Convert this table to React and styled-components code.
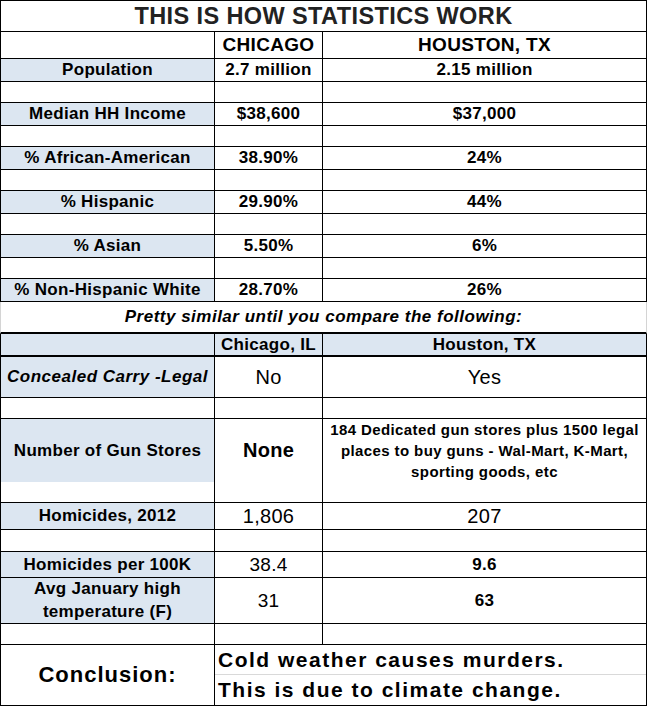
import React from 'react'
import styled, { createGlobalStyle } from 'styled-components'

const GlobalStyle = createGlobalStyle`
    body {
        margin: 0;
        background: #fff;
        font-family: "Liberation Sans", Arial, sans-serif;
        color: #000;
    }
`

const BLUE = '#dce6f1'

const Sheet = styled.div`
    width: 647px;
    border-top: 1px solid #000;
`

const Row = styled.div`
    box-sizing: border-box;
    display: grid;
    grid-template-columns: 214px 108px 1fr;
    height: ${p => p.$h}px;
    border-left: 1px solid #000;
    border-right: 1px solid #000;
    border-bottom: ${p => p.$line || 1}px solid #000;
`

const Cell = styled.div`
    display: flex;
    align-items: center;
    justify-content: center;
    text-align: center;
    background: ${p => (p.$blue ? BLUE : '#fff')};
    border-right: 1px solid #000;
    font-weight: ${p => (p.$light ? 400 : 700)};
    font-style: ${p => (p.$italic ? 'italic' : 'normal')};
    font-size: ${p => p.$size || 17}px;
    letter-spacing: ${p => p.$ls || 0.3}px;
    line-height: ${p => p.$lh || 1.15};
    white-space: pre-line;
    &:last-child {
        border-right: none;
    }
`

const TitleRow = styled.div`
    box-sizing: border-box;
    height: 31px;
    border-left: 1px solid #000;
    border-right: 1px solid #000;
    border-bottom: 1px solid #000;
    display: flex;
    align-items: center;
    justify-content: center;
    font-size: 23.5px;
    font-weight: 700;
    letter-spacing: 0.4px;
    color: #222;
`

const NoteRow = styled.div`
    box-sizing: border-box;
    height: 32px;
    border-left: 1px solid #d4d4d4;
    border-right: 1px solid #d4d4d4;
    border-bottom: 2px solid #000;
    display: flex;
    align-items: center;
    justify-content: center;
    font-size: 17px;
    font-weight: 700;
    font-style: italic;
    letter-spacing: 0.5px;
`

const ConclusionRow = styled.div`
    box-sizing: border-box;
    display: grid;
    grid-template-columns: 214px 1fr;
    height: 61px;
    border-left: 1px solid #000;
    border-right: 1px solid #000;
    border-bottom: 1px solid #000;
`

const ConclusionLabel = styled.div`
    display: flex;
    align-items: center;
    justify-content: center;
    border-right: 1px solid #000;
    font-size: 22px;
    font-weight: 700;
    letter-spacing: 1px;
`

const ConclusionLines = styled.div`
    display: grid;
    grid-template-rows: 30px 1fr;
`

const ConclusionLine = styled.div`
    display: flex;
    align-items: center;
    padding-left: 3px;
    font-size: 21px;
    font-weight: 700;
    letter-spacing: 1.5px;
    border-bottom: ${p => (p.$divider ? '1px solid #d9d9d9' : 'none')};
`

const firstTable = [
    ['Population', '2.7 million', '2.15 million'],
    ['Median HH Income', '$38,600', '$37,000'],
    ['% African-American', '38.90%', '24%'],
    ['% Hispanic', '29.90%', '44%'],
    ['% Asian', '5.50%', '6%'],
    ['% Non-Hispanic White', '28.70%', '26%'],
]

const BlankRow = ({ h = 21 }) => (
    <Row $h={h}>
        <Cell />
        <Cell />
        <Cell />
    </Row>
)

export default function App() {
    return (
        <>
            <GlobalStyle />
            <Sheet>
                <TitleRow>THIS IS HOW STATISTICS WORK</TitleRow>
                <Row $h={27}>
                    <Cell />
                    <Cell $size={19}>CHICAGO</Cell>
                    <Cell $size={19}>HOUSTON, TX</Cell>
                </Row>
                {firstTable.map((r, i) => (
                    <React.Fragment key={r[0]}>
                        {i > 0 && <BlankRow />}
                        <Row $h={23}>
                            <Cell $blue>{r[0]}</Cell>
                            <Cell>{r[1]}</Cell>
                            <Cell>{r[2]}</Cell>
                        </Row>
                    </React.Fragment>
                ))}
                <NoteRow>Pretty similar until you compare the following:</NoteRow>
                <Row $h={23} $line={2}>
                    <Cell $blue />
                    <Cell $blue>Chicago, IL</Cell>
                    <Cell $blue>Houston, TX</Cell>
                </Row>
                <Row $h={41}>
                    <Cell $blue $italic $ls={0.5}>Concealed Carry -Legal</Cell>
                    <Cell $light $size={20}>No</Cell>
                    <Cell $light $size={20}>Yes</Cell>
                </Row>
                <BlankRow />
                <Row $h={63}>
                    <Cell $blue>Number of Gun Stores</Cell>
                    <Cell $size={20}>None</Cell>
                    <Cell $size={15} $ls={0.4} $lh={1.4}>
                        {'184 Dedicated gun stores plus 1500 legal\nplaces to buy guns - Wal-Mart, K-Mart,\nsporting goods, etc'}
                    </Cell>
                </Row>
                <BlankRow />
                <Row $h={27}>
                    <Cell $blue>Homicides, 2012</Cell>
                    <Cell $light $size={20}>1,806</Cell>
                    <Cell $light $size={20}>207</Cell>
                </Row>
                <BlankRow h={22} />
                <Row $h={26}>
                    <Cell $blue>Homicides per 100K</Cell>
                    <Cell $light $size={19}>38.4</Cell>
                    <Cell $size={17}>9.6</Cell>
                </Row>
                <Row $h={46}>
                    <Cell $blue $size={17} $lh={1.3}>{'Avg January high\ntemperature (F)'}</Cell>
                    <Cell $light $size={19}>31</Cell>
                    <Cell $size={17}>63</Cell>
                </Row>
                <BlankRow />
                <ConclusionRow>
                    <ConclusionLabel>Conclusion:</ConclusionLabel>
                    <ConclusionLines>
                        <ConclusionLine $divider>Cold weather causes murders.</ConclusionLine>
                        <ConclusionLine>This is due to climate change.</ConclusionLine>
                    </ConclusionLines>
                </ConclusionRow>
            </Sheet>
        </>
    )
}
